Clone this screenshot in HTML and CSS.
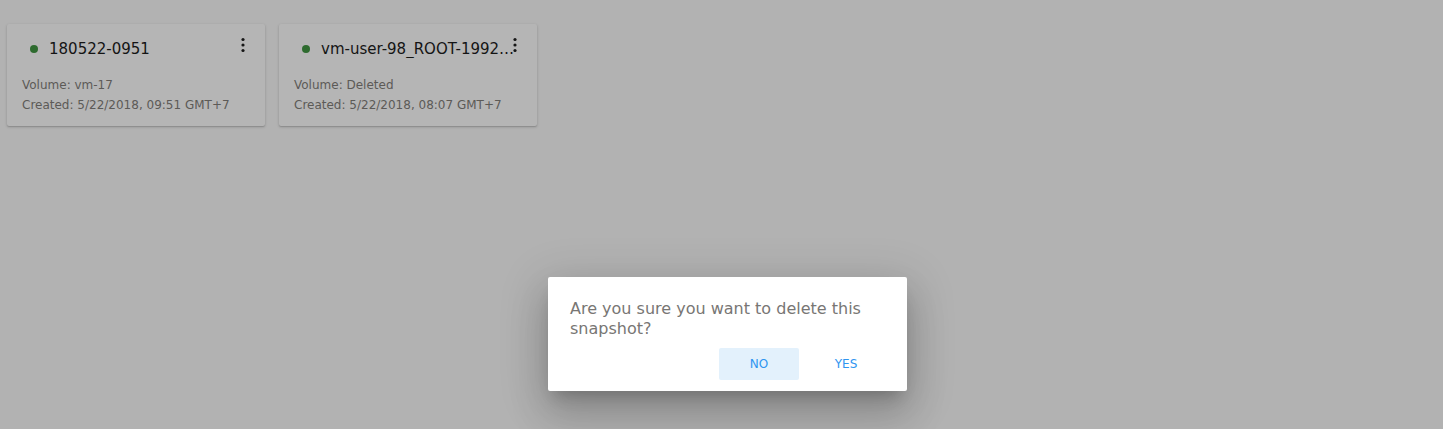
FILE: index.html
```html
<!DOCTYPE html>
<html lang="en">
<head>
<meta charset="utf-8">
<title>Snapshots</title>
<link rel="stylesheet" href="styles.css">
</head>
<body>
<main class="page">
  <div class="cards">
    <article class="card">
      <header class="card-head">
        <span class="dot"></span>
        <span class="title">180522-0951</span>
      </header>
      <div class="meta">
        <div>Volume: vm-17</div>
        <div>Created: 5/22/2018, 09:51 GMT+7</div>
      </div>
      <button class="kebab" aria-label="menu">
        <svg width="6" height="16" viewBox="0 0 6 16"><circle cx="3" cy="2.5" r="1.6"/><circle cx="3" cy="8" r="1.6"/><circle cx="3" cy="13.5" r="1.6"/></svg>
      </button>
    </article>
    <article class="card">
      <header class="card-head">
        <span class="dot"></span>
        <span class="title">vm-user-98_ROOT-1992-2018-05-22</span>
      </header>
      <div class="meta">
        <div>Volume: Deleted</div>
        <div>Created: 5/22/2018, 08:07 GMT+7</div>
      </div>
      <button class="kebab" aria-label="menu">
        <svg width="6" height="16" viewBox="0 0 6 16"><circle cx="3" cy="2.5" r="1.6"/><circle cx="3" cy="8" r="1.6"/><circle cx="3" cy="13.5" r="1.6"/></svg>
      </button>
    </article>
  </div>
</main>
<div class="dialog" role="dialog">
  <p class="dialog-text">Are you sure you want to delete this snapshot?</p>
  <div class="actions">
    <button class="btn btn-focus">NO</button>
    <button class="btn">YES</button>
  </div>
</div>
</body>
</html>
```
FILE: styles.css
```css
html, body {
  margin: 0;
  padding: 0;
}
body {
  background: #b2b2b2;
  font-family: "DejaVu Sans", Verdana, sans-serif;
  width: 1443px;
  height: 429px;
  overflow: hidden;
  position: relative;
}
.page {
  padding: 24px 0 0 7px;
}
.cards {
  display: flex;
  gap: 14px;
}
.card {
  position: relative;
  width: 258px;
  height: 102px;
  box-sizing: border-box;
  background: #b5b5b5;
  border-radius: 2px;
  box-shadow: 0 1px 3px rgba(0,0,0,0.18), 0 1px 1px rgba(0,0,0,0.1);
  padding: 15px 20px 0 15px;
}
.card-head {
  display: flex;
  align-items: center;
  height: 20px;
  padding-left: 8px;
}
.dot {
  flex: none;
  width: 8px;
  height: 8px;
  border-radius: 50%;
  background: #2e6b2f;
  margin-right: 11px;
}
.title {
  flex: 1;
  min-width: 0;
  white-space: nowrap;
  overflow: hidden;
  text-overflow: ellipsis;
  font-size: 15px;
  color: #141414;
}
.meta {
  margin-top: 16px;
  font-size: 12px;
  line-height: 20px;
  color: #5c5a57;
}
.kebab {
  position: absolute;
  top: 13px;
  right: 17px;
  width: 10px;
  height: 16px;
  padding: 0;
  border: 0;
  background: none;
  display: flex;
  align-items: center;
  justify-content: center;
}
.kebab svg {
  fill: #161616;
  display: block;
}
.dialog {
  position: absolute;
  left: 548px;
  top: 277px;
  width: 359px;
  box-sizing: border-box;
  background: #ffffff;
  border-radius: 2px;
  box-shadow: 0 11px 15px -7px rgba(0,0,0,0.2), 0 24px 38px 3px rgba(0,0,0,0.14), 0 9px 46px 8px rgba(0,0,0,0.12);
  padding: 22px 21px 11px 22px;
}
.dialog-text {
  margin: 0;
  font-size: 16px;
  line-height: 20px;
  color: #787674;
}
.actions {
  display: flex;
  justify-content: flex-end;
  gap: 7px;
  margin-top: 9px;
}
.btn {
  width: 80px;
  height: 32px;
  border: 0;
  border-radius: 2px;
  background: transparent;
  font-family: "DejaVu Sans", Verdana, sans-serif;
  font-size: 12px;
  color: #2f95f0;
  padding: 0;
}
.btn-focus {
  background: #e3f1fc;
}
```
